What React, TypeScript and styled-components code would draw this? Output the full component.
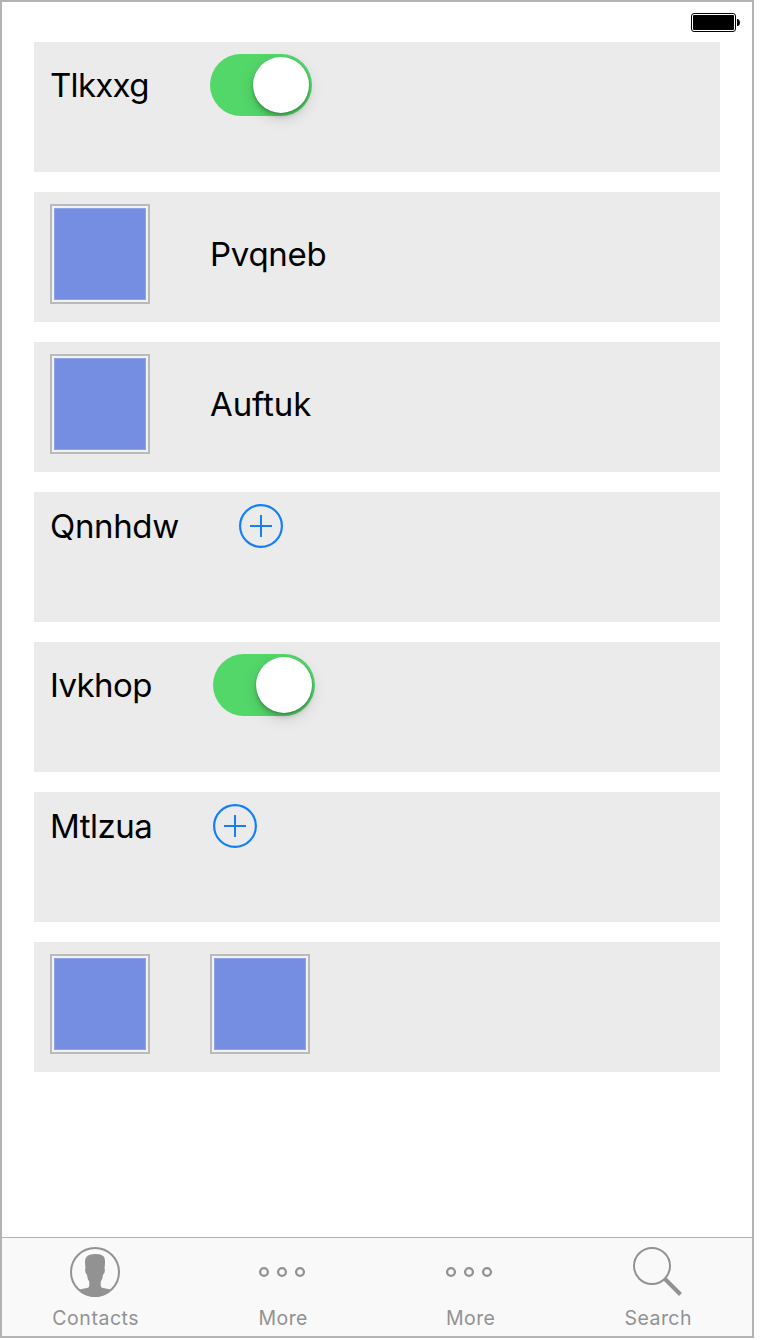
import React from "react";
import styled, { createGlobalStyle } from "styled-components";

const GlobalStyle = createGlobalStyle`
  * { box-sizing: border-box; }
  body { margin: 0; background: #fff; font-family: Inter, "Liberation Sans", sans-serif; }
`;

const Screen = styled.div`
  width: 754px;
  height: 1338px;
  border: 2px solid #b3b3b3;
  background: #fff;
  display: flex;
  flex-direction: column;
`;

const StatusBar = styled.header`
  height: 40px;
  flex: none;
  display: flex;
  justify-content: flex-end;
  padding: 11px 11px 0 0;
`;

const Rows = styled.main`
  flex: 1;
  display: flex;
  flex-direction: column;
  gap: 20px;
  padding: 0 32px;
`;

const Row = styled.section`
  height: 130px;
  padding: 12px 16px;
  background: #ebebeb;
`;

const RowContent = styled.div`
  display: flex;
  align-items: center;
  gap: 60px;
`;

const Label = styled.span<{ $width: number; $spacing: number }>`
  width: ${(p) => p.$width}px;
  font-size: 33px;
  line-height: 40px;
  letter-spacing: ${(p) => p.$spacing}px;
  white-space: nowrap;
  color: #000;
`;

const Track = styled.button`
  width: 102px;
  height: 62px;
  border: 0;
  border-radius: 31px;
  padding: 3px;
  background: #53d769;
  display: flex;
  justify-content: flex-end;
`;

const Knob = styled.span`
  width: 56px;
  height: 56px;
  border-radius: 50%;
  background: #fff;
  box-shadow: 0 4px 4px rgba(0, 0, 0, 0.15), 0 1px 2px rgba(0, 0, 0, 0.2), 0 5px 16px rgba(0, 0, 0, 0.14);
`;

const Swatch = styled.div`
  width: 100px;
  height: 100px;
  border: 2px solid #bababa;
  padding: 2px;
  background: #f0f2fa;
`;

const SwatchFill = styled.div`
  height: 92px;
  border: 1px solid #8fa2e8;
  background: #758ee2;
`;

const AddButton = styled.button`
  display: block;
  padding: 0;
  border: 0;
  background: none;
  svg { display: block; }
`;

const TabBar = styled.nav`
  height: 99px;
  flex: none;
  display: flex;
  border-top: 1px solid #b2b2b2;
  background: #f9f9f9;
  color: #929292;
`;

const Tab = styled.div`
  flex: 1;
  display: flex;
  flex-direction: column;
  align-items: center;
  padding-top: 9px;
  svg { display: block; margin-right: 1.5px; }
`;

const TabLabel = styled.span<{ $spacing: number }>`
  margin-top: 9px;
  font-size: 19.5px;
  line-height: 24px;
  letter-spacing: ${(p) => p.$spacing}px;
`;

const Battery = () => (
  <svg width="50" height="19" viewBox="0 0 50 19">
    <rect x="0.5" y="0.5" width="44" height="18" rx="2.5" fill="#fff" stroke="#000" />
    <rect x="2" y="2" width="41" height="15" rx="1" />
    <path d="M46 6h1q2 1 2 3.5T47 13h-1z" />
  </svg>
);

const Switch = () => (
  <Track aria-label="Toggle">
    <Knob />
  </Track>
);

const Tile = () => (
  <Swatch>
    <SwatchFill />
  </Swatch>
);

const Add = () => (
  <AddButton aria-label="Add">
    <svg width="44" height="44" viewBox="0 0 44 44" fill="none" stroke="#147efb" strokeWidth="2">
      <circle cx="22" cy="22" r="20.9" strokeWidth="2.2" />
      <path d="M22 11v22M11 22h22" />
    </svg>
  </AddButton>
);

const ContactsIcon = () => (
  <svg width="50" height="50" viewBox="0 0 50 50">
    <circle cx="25" cy="25" r="24" fill="none" stroke="currentColor" strokeWidth="2" />
    <path
      fill="currentColor"
      d="M9 43C12 41.3 17 41.500 18.6 40.3C19.4 39.5 19.4 36.500 19.200 34.500C18 32.500 17.200 30.500 17 27.500C15.300 27 14.700 22.500 15.500 21C15 17 14.600 13 16 10.500C18 7.800 21.500 7 25 7C29 7 33 7.700 34.300 10.500C35.500 13.500 35 18 34.500 21C35.300 23 34.700 27 33 27.500C32.800 30.500 32 32.500 30.800 34.500C30.600 36.500 30.600 39.500 31.400 40.300C33 41.500 38 41.300 41 43C37 47.500 31 50 25 50C19 50 13 47.500 9 43Z"
    />
  </svg>
);

const MoreIcon = () => (
  <svg width="50" height="50" viewBox="0 0 50 50" fill="none" stroke="currentColor" strokeWidth="2.3">
    <circle cx="6" cy="25" r="3.9" />
    <circle cx="24" cy="25" r="3.9" />
    <circle cx="42" cy="25" r="3.9" />
  </svg>
);

const SearchIcon = () => (
  <svg width="50" height="50" viewBox="0 0 50 50" fill="none" stroke="currentColor">
    <circle cx="19" cy="19" r="18" strokeWidth="2" />
    <path d="M32 32L47.500 47.500" strokeWidth="4" />
  </svg>
);

const tabs = [
  { label: "Contacts", spacing: 0.55, Icon: ContactsIcon },
  { label: "More", spacing: 0.4, Icon: MoreIcon },
  { label: "More", spacing: 0.4, Icon: MoreIcon },
  { label: "Search", spacing: 0.45, Icon: SearchIcon },
];

export default function App() {
  return (
    <>
      <GlobalStyle />
      <Screen>
        <StatusBar>
          <Battery />
        </StatusBar>
        <Rows>
          <Row>
            <RowContent>
              <Label $width={100} $spacing={-0.7}>Tlkxxg</Label>
              <Switch />
            </RowContent>
          </Row>
          <Row>
            <RowContent>
              <Tile />
              <Label $width={117} $spacing={-0.3}>Pvqneb</Label>
            </RowContent>
          </Row>
          <Row>
            <RowContent>
              <Tile />
              <Label $width={101} $spacing={-0.1}>Auftuk</Label>
            </RowContent>
          </Row>
          <Row>
            <RowContent>
              <Label $width={129} $spacing={-0.35}>Qnnhdw</Label>
              <Add />
            </RowContent>
          </Row>
          <Row>
            <RowContent>
              <Label $width={103} $spacing={-0.6}>Ivkhop</Label>
              <Switch />
            </RowContent>
          </Row>
          <Row>
            <RowContent>
              <Label $width={103} $spacing={-0.5}>Mtlzua</Label>
              <Add />
            </RowContent>
          </Row>
          <Row>
            <RowContent>
              <Tile />
              <Tile />
            </RowContent>
          </Row>
        </Rows>
        <TabBar>
          {tabs.map(({ label, spacing, Icon }, i) => (
            <Tab key={i}>
              <Icon />
              <TabLabel $spacing={spacing}>{label}</TabLabel>
            </Tab>
          ))}
        </TabBar>
      </Screen>
    </>
  );
}
